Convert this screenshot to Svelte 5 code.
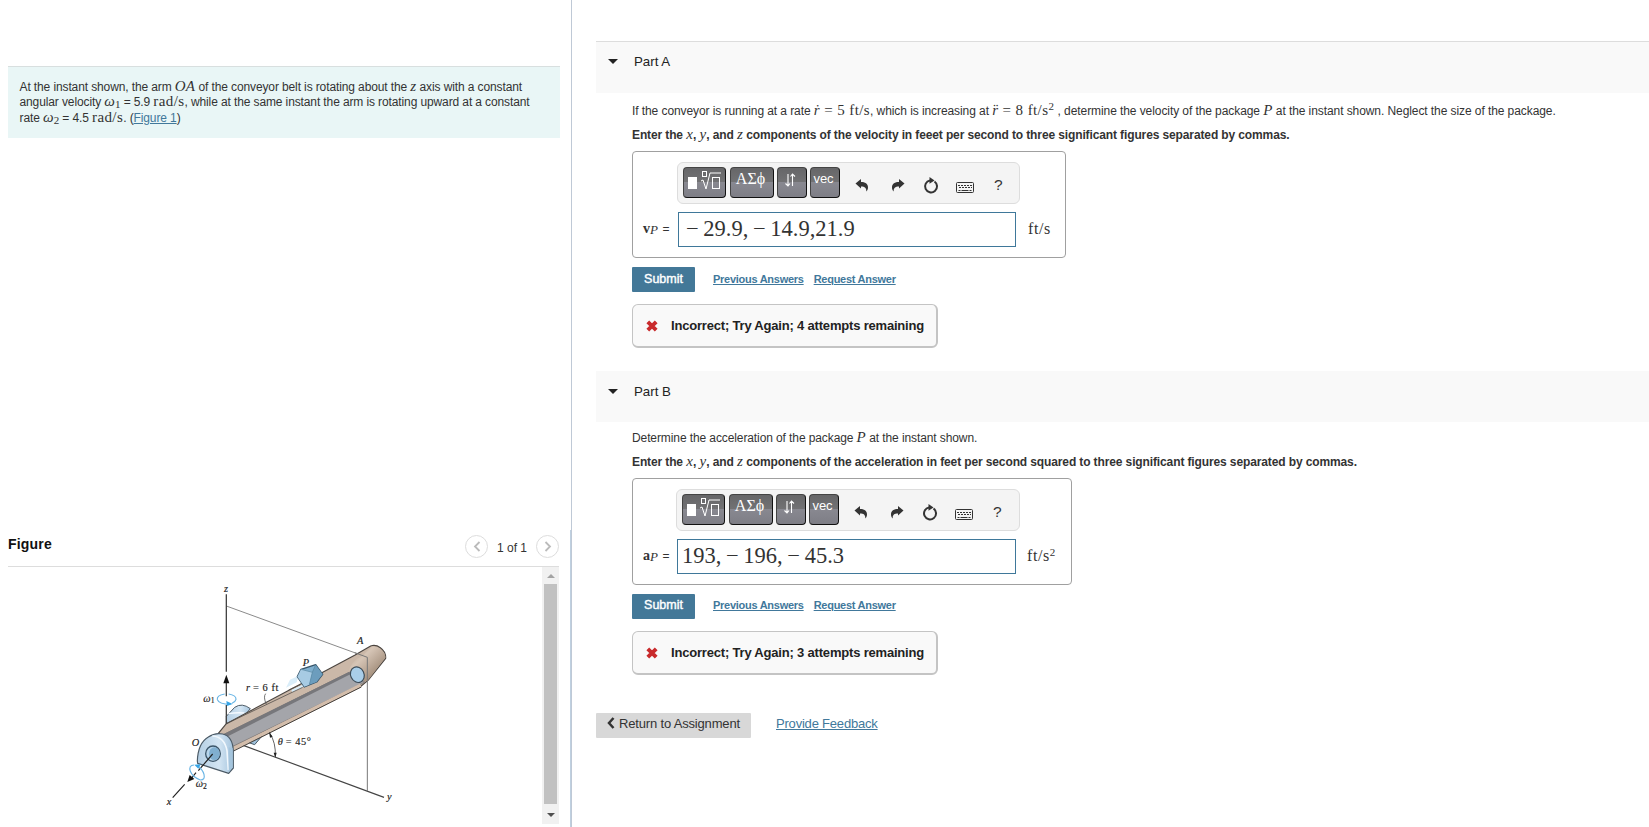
<script>
    let velocity = $state('− 29.9, − 14.9,21.9');
    let acceleration = $state('193, − 196, − 45.3');
</script>

{#snippet toolbar()}
    <div class="toolbar">
        <button class="dark wide">
            <svg width="33" height="22" viewBox="0 0 33 22" fill="none" stroke="#fff">
                <rect x="0" y="7" width="9" height="12" fill="#fff" stroke="none"/>
                <path d="M13 11l2-1 3 9 4-16h11"/>
                <rect x="14.5" y="1.5" width="4" height="5"/>
                <rect x="24.5" y="7.5" width="7" height="11"/>
            </svg>
        </button>
        <button class="dark greek">ΑΣϕ</button>
        <button class="dark narrow">
            <svg width="14" height="16" viewBox="0 0 14 16" fill="none" stroke="#fff" stroke-width="1.1">
                <path d="M4 1v12M1.500 10.500L4 13l2-2.500M8.500 13V1M6.500 3.500l2-2.500L11 3.500"/>
            </svg>
        </button>
        <button class="dark narrow vec">vec</button>
        <svg class="undo" width="14" height="13" viewBox="0 0 14 13" fill="#333">
            <path d="M0.500 4.500L6 0v3c4 0 7 1.500 7 5.500 0 1.800-.7 3-1.700 4 .2-3.500-1.300-5-5.300-5v2z"/>
        </svg>
        <svg class="redo" width="14" height="13" viewBox="0 0 14 13" fill="#333">
            <path d="M13.500 4.500L8 0v3C4 3 1 4.500 1 8.500c0 1.800.7 3 1.700 4-.2-3.500 1.300-5 5.300-5v2z"/>
        </svg>
        <svg class="reset" width="16" height="17" viewBox="0 0 16 17" fill="none" stroke="#333" stroke-width="2">
            <path d="M11.500 4.500A6 6 0 1 1 7 3.500"/>
            <path d="M6.500 0l5 3.500-5 3.200z" fill="#333" stroke="none"/>
        </svg>
        <svg class="keys" width="18" height="12" viewBox="0 0 18 12" fill="none" stroke="#333">
            <rect x=".5" y=".5" width="17" height="10" rx="1"/>
            <path d="M2 3.500h14M3 5.500h13" stroke-dasharray="2 1"/>
            <path d="M2.500 8.500h2M5.500 8.500h7M13.500 8.500h2"/>
        </svg>
        <span class="help">?</span>
    </div>
{/snippet}

{#snippet result(left)}
    <div class="actions">
        <button class="submit">Submit</button>
        <a href="#previous" class="previous">Previous Answers</a>
        <a href="#request" class="request">Request Answer</a>
    </div>
    <div class="feedback">
        <svg width="12" height="12" viewBox="0 0 12 12">
            <path d="M1.800 1.800l8.400 8.400M10.200 1.800l-8.400 8.400" stroke="#c92a2c" stroke-width="3.900"/>
        </svg>
        <span>Incorrect; Try Again; {left} attempts remaining</span>
    </div>
{/snippet}

<div class="page">
    <aside>
        <div class="intro">
            <div>At the instant shown, the arm <i class="m">OA</i> of the conveyor belt is rotating about the <i class="m">z</i> axis with a constant</div>
            <div>angular velocity <i class="m">ω</i><sub>1</sub> = 5.9 <span class="u">rad/s</span>, while at the same instant the arm is rotating upward at a constant</div>
            <div>rate <i class="m">ω</i><sub>2</sub> = 4.5 <span class="u">rad/s</span>. (<a href="#figure">Figure 1</a>)</div>
        </div>

        <div class="figure">
            <div class="head">
                <b>Figure</b>
                <div class="pager">
                    <button class="round">
                        <svg width="8" height="12" viewBox="0 0 8 12"><path d="M6.500 1L2 5.500l4.500 4.500"/></svg>
                    </button>
                    <span>1 of 1</span>
                    <button class="round">
                        <svg width="8" height="12" viewBox="0 0 8 12"><path d="M1.500 1L6 5.500 1.500 10"/></svg>
                    </button>
                </div>
            </div>
            <div class="view">
                <svg class="drawing" width="250" height="240" viewBox="0 0 750 720" fill="none" stroke-linejoin="round">
                    <defs>
                        <linearGradient id="belt" x1="0" y1="0" x2="1" y2="1">
                            <stop offset="0" stop-color="#b59f8b"/>
                            <stop offset=".35" stop-color="#d6c5b6"/>
                            <stop offset="1" stop-color="#846d58"/>
                        </linearGradient>
                        <linearGradient id="steel" x1="0" y1="0" x2="1" y2="0">
                            <stop offset="0" stop-color="#b4cee3"/>
                            <stop offset=".6" stop-color="#d3e5f3"/>
                            <stop offset="1" stop-color="#a5c4dd"/>
                        </linearGradient>
                    </defs>

                    <!-- reference plane -->
                    <path d="M229 93L652 247" stroke="#8b8b8b" stroke-width="3"/>
                    <path d="M280 511L702 667" stroke="#444" stroke-width="3.500"/>

                    <!-- rear bracket -->
                    <path d="M229 446V424L254 397q22-15 47 4l-30 35z" fill="url(#steel)" stroke="#4c5b67" stroke-width="3"/>
                    <path d="M235 416q25-4 48-2" stroke="#f5faff" stroke-width="4"/>
                    <path d="M288 500l26 9 22-26-25-2z" fill="#9fc2dc" stroke="#4c5b67" stroke-width="3"/>

                    <!-- belt -->
                    <path d="M205 475L229 446 614 241 662 213q15-5 29 5 17 12 16 32l-53 66-24 20-383 190z" fill="#cbb8a8" stroke="#4b4540" stroke-width="3.500"/>
                    <path d="M597 289q5-30 40-47l29-28q35 2 41 33l-53 69-12 4q5-26-27-43-12-4-18 12z" fill="url(#belt)"/>
                    <path d="M222 478L598 292l46 29-14 8-383 186z" fill="#a4a5aa" stroke="#6c6765" stroke-width="2"/>
                    <path d="M217 479L598 290l3 8-376 190z" fill="#77777b"/>
                    <path d="M244 524L632 331" stroke="#d3bdab" stroke-width="10"/>
                    <path d="M247 530L634 336" stroke="#4b4540" stroke-width="3"/>
                    <ellipse cx="622" cy="299" rx="20" ry="24" transform="rotate(-25 622 299)" fill="#a9cee9" stroke="#3c4c58" stroke-width="3.500"/>
                    <path d="M652 247V648" stroke="#777" stroke-width="3"/>
                    <path d="M614 233l38 14" stroke="#777" stroke-width="3"/>

                    <!-- package -->
                    <path d="M420 314l26-12-6 20-32 16zM424 345l40-19-7 12-30 14z" fill="#d9edf9"/>
                    <path d="M229 446L458 337M416 345l35-16" stroke="#59534e" stroke-width="2.500"/>
                    <path d="M347 356q-8 9 2 32" stroke="#555" stroke-width="2.500"/>
                    <path d="M442 305L453 283 497 269 518 298 500 321 463 336z" fill="#7fafce" stroke="#375468" stroke-width="4"/>
                    <path d="M442 305L453 283 487 292 478 329 463 335z" fill="#a7cbe3"/>
                    <path d="M487 292L497 269 518 298 500 321 478 329z" fill="#6c9dbd"/>
                    <path d="M453 283L487 292 497 269M487 292L478 329" stroke="#56859f" stroke-width="2"/>

                    <!-- front bracket -->
                    <path d="M142 558q2-54 33-72 20-14 43-9 30 7 32 50v52l-14 16-93-30z" fill="url(#steel)" stroke="#4c5b67" stroke-width="3.500"/>
                    <path d="M187 483q36 2 44 44l4 58" stroke="#f1f8fd" stroke-width="5"/>
                    <path d="M236 517l12 3v57l-12 15z" fill="#a5c5dd"/>
                    <ellipse cx="189" cy="536" rx="22" ry="23" fill="#b7d5eb" stroke="#3c566a" stroke-width="4"/>
                    <ellipse cx="193" cy="536" rx="16" ry="19" fill="#80afd0"/>

                    <!-- axes -->
                    <path d="M229 58V290M229 322V364M229 390V446" stroke="#444" stroke-width="4"/>
                    <path d="M229 299l9 26h-18z" fill="#111"/>
                    <path d="M188 537L145 587M138 593l-14 17M104 628L68 668" stroke="#222" stroke-width="3.500"/>
                    <path d="M112 621l7-21 14 12z" fill="#111"/>

                    <!-- rotation arrows -->
                    <path d="M224 357q-24 4-22 17 5 14 39 14M236 357q23 4 22 16-2 8-12 12" stroke="#69b5e5" stroke-width="3.500"/>
                    <path d="M248 387l-19-9 2 15z" fill="#36a4e5"/>
                    <path d="M132 570q-17 1-11 19 7 18 30 26 15 0 11-17-4-15-19-26" stroke="#69b5e5" stroke-width="3.500"/>
                    <path d="M133 569l19-1-7 13z" fill="#36a4e5"/>

                    <!-- angle -->
                    <path d="M359 474q19 29 17 71" stroke="#444" stroke-width="2.500"/>
                    <path d="M357 470l11 15-8 3zM376 548l-5-15h9z" fill="#222"/>

                    <g class="labels">
                        <text x="222" y="52">z</text>
                        <text x="621" y="206">A</text>
                        <text x="458" y="272">P</text>
                        <text x="288" y="348">r <tspan class="up loose" x="309">= 6 ft</tspan></text>
                        <text x="160" y="380">ω<tspan class="up small" dy="4">1</tspan></text>
                        <text x="125" y="514">O</text>
                        <text x="383" y="510">θ <tspan class="up loose" x="407">= 45°</tspan></text>
                        <text x="137" y="636">ω<tspan class="up small" dy="6">2</tspan></text>
                        <text x="50" y="690">x</text>
                        <text x="711" y="676">y</text>
                    </g>
                </svg>
                <div class="scroll">
                    <span class="arrow"></span>
                    <span class="thumb"></span>
                    <span class="arrow down"></span>
                </div>
            </div>
        </div>
    </aside>

    <main>
        <section class="first">
            <header><span class="caret"></span>Part A</header>
            <div class="body">
                <p class="task">If the conveyor is running at a rate <i class="m">ṙ</i> <span class="u eq">=</span> <span class="u">5 ft/s</span>, which is increasing at <i class="m">r̈</i> <span class="u eq">=</span> <span class="u">8 ft/s<sup>2</sup></span> , determine the velocity of the package <i class="m">P</i> at the instant shown. Neglect the size of the package.</p>
                <p class="hint">Enter the <i class="m">x</i>, <i class="m">y</i>, and <i class="m">z</i> components of the velocity in feeet per second to three significant figures separated by commas.</p>
                <div class="answer">
                    {@render toolbar()}
                    <div class="row">
                        <label for="vp"><b>v</b><i>P</i> <span>=</span></label>
                        <input id="vp" bind:value={velocity}/>
                        <span class="unit">ft/s</span>
                    </div>
                </div>
                {@render result(4)}
            </div>
        </section>

        <section class="second">
            <header><span class="caret"></span>Part B</header>
            <div class="body">
                <p class="task">Determine the acceleration of the package <i class="m">P</i> at the instant shown.</p>
                <p class="hint">Enter the <i class="m">x</i>, <i class="m">y</i>, and <i class="m">z</i> components of the acceleration in feet per second squared to three significant figures separated by commas.</p>
                <div class="answer">
                    {@render toolbar()}
                    <div class="row">
                        <label for="ap"><b>a</b><i>P</i> <span>=</span></label>
                        <input id="ap" bind:value={acceleration}/>
                        <span class="unit">ft/s<sup>2</sup></span>
                    </div>
                </div>
                {@render result(3)}
            </div>
        </section>

        <footer>
            <button class="return">
                <svg width="8" height="12" viewBox="0 0 8 12" fill="none" stroke="#333" stroke-width="2.500"><path d="M6.500 1L2 6l4.500 5"/></svg>
                <span>Return to Assignment</span>
            </button>
            <a href="#feedback">Provide Feedback</a>
        </footer>
    </main>
</div>

<style>
    :global(body) {
        background: #fff;
        overflow: hidden;
    }

    .page {
        display: flex;
        height: 827px;
        font-family: "Liberation Sans", Arial, sans-serif;
        font-size: 12px;
        color: #333;
    }

    .page * {
        box-sizing: border-box;
    }

    button {
        border: 0;
        padding: 0;
        font-family: inherit;
    }

    a {
        color: #41789b;
    }

    aside {
        display: flex;
        flex-direction: column;
        justify-content: space-between;
        flex: none;
        width: 572px;
        padding-top: 66px;
        border-right: 1px solid #bfc9d6;
    }

    .intro {
        width: 552px;
        height: 72px;
        margin-left: 8px;
        padding: 13px 0 0 11.500px;
        background: #e9f6f6;
        border-top: 1px solid #d8dfdf;
        line-height: 15.400px;
        letter-spacing: -0.115px;
        white-space: nowrap;
    }

    .m, .u {
        font-family: "Liberation Serif", serif;
        font-size: 15px;
        font-weight: normal;
        letter-spacing: 0.2px;
        line-height: 0;
    }

    .u {
        letter-spacing: 0.4px;
    }

    sub, sup {
        font-family: "Liberation Serif", serif;
        font-size: 11px;
        line-height: 0;
    }

    sub {
        vertical-align: -2px;
    }

    sup {
        vertical-align: 5px;
    }

    .figure {
        height: 297px;
        padding-left: 8px;
        border-right: 1px solid #bfd0e0;
    }

    .head {
        display: flex;
        justify-content: space-between;
        width: 551px;
        height: 37px;
        border-bottom: 1px solid #ddd;
    }

    .head b {
        margin-top: 6px;
        font-size: 14px;
        line-height: 16px;
        letter-spacing: 0.2px;
        color: #111;
    }

    .pager {
        display: flex;
        align-items: center;
        height: 23px;
        margin-top: 5px;
    }

    .pager span {
        width: 48px;
        text-align: center;
        font-size: 12px;
        padding-top: 2px;
    }

    .round {
        display: flex;
        align-items: center;
        justify-content: center;
        width: 23px;
        height: 23px;
        background: #fff;
        border: 1px solid #ddd;
        border-radius: 50%;
    }

    .round path {
        fill: none;
        stroke: #bbb;
        stroke-width: 1.800;
    }

    .view {
        display: flex;
        justify-content: space-between;
        width: 551px;
        height: 257px;
    }

    .drawing {
        margin: 8px 0 0 142px;
    }

    .labels {
        font-family: "Liberation Serif", serif;
        font-style: italic;
        font-size: 31px;
        fill: #222;
        stroke: #222;
        stroke-width: 0.5;
    }

    .up {
        font-style: normal;
    }

    .loose {
        letter-spacing: 1.8px;
    }

    .small {
        font-size: 23px;
    }

    .scroll {
        display: flex;
        flex-direction: column;
        justify-content: space-between;
        align-items: center;
        width: 17px;
        padding: 7px 0;
        background: #f1f1f1;
    }

    .thumb {
        width: 13px;
        height: 220px;
        margin-bottom: 4px;
        background: #c1c1c1;
    }

    .arrow {
        border: 4px solid transparent;
        border-top: 0;
        border-bottom: 4px solid #a3a3a3;
    }

    .arrow.down {
        border-bottom: 0;
        border-top: 4px solid #505050;
    }

    main {
        flex: 1;
        padding: 41px 0 0 24px;
    }

    header {
        display: flex;
        height: 51px;
        padding: 13px 0 0 12px;
        background: #f9f9f9;
        font-size: 13.300px;
        line-height: 15px;
        color: #222;
    }

    .first header {
        height: 52px;
        padding-top: 12px;
        border-top: 1px solid #ddd;
    }

    .caret {
        width: 10px;
        height: 5px;
        margin: 5px 16px 0 0;
        background: #222;
        clip-path: polygon(0 0, 100% 0, 50% 100%);
    }

    .body {
        padding-left: 36px;
    }

    p {
        margin: 0;
        white-space: nowrap;
        line-height: 16px;
        letter-spacing: -0.12px;
    }

    .task {
        padding-top: 10px;
    }

    .first .task {
        letter-spacing: -0.08px;
    }

    .second .task {
        padding-top: 8px;
        letter-spacing: -0.1px;
    }

    .hint {
        margin-top: 8px;
        font-weight: bold;
    }

    .eq {
        margin: 0 1px;
    }

    .answer {
        width: 434px;
        height: 107px;
        margin-top: 8px;
        padding: 10px 0 0 44px;
        border: 1px solid #a0a0a0;
        border-radius: 4px;
    }

    .toolbar {
        display: flex;
        align-items: flex-start;
        width: 343px;
        height: 42px;
        padding: 4px 0 0 5px;
        background: #f4f4f4;
        border: 1px solid #ddd;
        border-radius: 6px;
    }

    .dark {
        display: flex;
        justify-content: center;
        flex: none;
        height: 31px;
        margin-right: 3px;
        background: linear-gradient(#666668 0, #727274 49%, #888890 50%, #7e7e86 100%);
        border: 1px solid #444;
        border-right-color: #111;
        border-bottom-color: #111;
        border-radius: 4px;
        color: #fff;
    }

    .wide {
        width: 43px;
        margin-right: 4px;
        padding-top: 2px;
    }

    .greek {
        width: 44px;
        padding: 2px 3px 0 0;
        font-family: "Liberation Serif", serif;
        font-size: 16px;
    }

    .narrow {
        width: 30px;
        padding: 5px 3px 0 0;
    }

    .vec {
        padding-top: 3px;
        font-size: 13px;
    }

    .undo {
        margin: 12px 0 0 12px;
    }

    .redo {
        margin: 12px 0 0 22px;
    }

    .reset {
        margin: 10px 0 0 18px;
    }

    .keys {
        margin: 15px 0 0 17px;
    }

    .help {
        margin: 9px 0 0 20px;
        font-size: 15.500px;
    }

    .row {
        display: flex;
        align-items: center;
        margin: 8px 0 0 -34px;
    }

    label {
        width: 35px;
        margin-top: -2px;
        font-family: "Liberation Serif", serif;
        font-size: 14px;
        white-space: nowrap;
    }

    label b {
        font-size: 14px;
    }

    label i {
        position: relative;
        top: 1px;
        margin-right: 1px;
        font-size: 13px;
    }

    label span {
        font-family: "Liberation Sans", sans-serif;
        font-size: 12px;
    }

    input {
        width: 338px;
        height: 35px;
        padding: 0 0 1px 7px;
        border: 1px solid #3f789a;
        border-radius: 0;
        font-family: "Liberation Serif", serif;
        font-size: 22.500px;
        word-spacing: -1px;
        color: #333;
    }

    .unit {
        margin: -2px 0 0 12px;
        font-family: "Liberation Serif", serif;
        font-size: 16px;
        letter-spacing: 0.6px;
    }

    .second .answer {
        width: 440px;
        padding-left: 43px;
    }

    .second .toolbar {
        width: 344px;
    }

    .second .row {
        margin-left: -33px;
    }

    .second label {
        width: 34px;
    }

    .second input {
        width: 339px;
        padding-left: 4px;
    }

    .second .unit {
        margin-left: 11px;
    }

    .actions {
        display: flex;
        margin-top: 9px;
        height: 25px;
    }

    .submit {
        width: 63px;
        height: 25px;
        padding-bottom: 2px;
        background: #437898;
        border-radius: 1px;
        color: #fff;
        font-size: 12.500px;
        -webkit-text-stroke: 0.4px #fff;
    }

    .actions a {
        margin-top: 6px;
        font-size: 11px;
        line-height: 13px;
        font-weight: bold;
        letter-spacing: -0.27px;
        white-space: nowrap;
    }

    .second .submit {
        padding-bottom: 4px;
    }

    .second .actions a {
        margin-top: 5px;
    }

    .actions .previous {
        margin-left: 18px;
        margin-right: 10px;
    }

    .feedback {
        display: flex;
        align-items: center;
        width: 306px;
        height: 44px;
        margin-top: 12px;
        padding-left: 13px;
        background: #f9f9f9;
        border: 1px solid #c4c4c4;
        border-right-width: 2px;
        border-bottom-width: 2px;
        border-radius: 6px;
        color: #222;
        font-size: 13px;
        font-weight: bold;
        letter-spacing: -0.19px;
        white-space: nowrap;
    }

    .feedback span {
        margin-left: 13px;
    }

    .second {
        margin-top: 23px;
    }

    footer {
        display: flex;
        margin-top: 38px;
        font-size: 13px;
        letter-spacing: -0.2px;
    }

    .return {
        display: flex;
        width: 155px;
        height: 25px;
        padding: 4px 0 0 11px;
        background: #d8d8d8;
        border-radius: 1px;
        color: #333;
        font-size: 13px;
        line-height: 14px;
        letter-spacing: -0.17px;
        white-space: nowrap;
    }

    .return span {
        margin-left: 4px;
    }

    footer a {
        margin: 3px 0 0 25px;
        line-height: 15px;
    }
</style>
